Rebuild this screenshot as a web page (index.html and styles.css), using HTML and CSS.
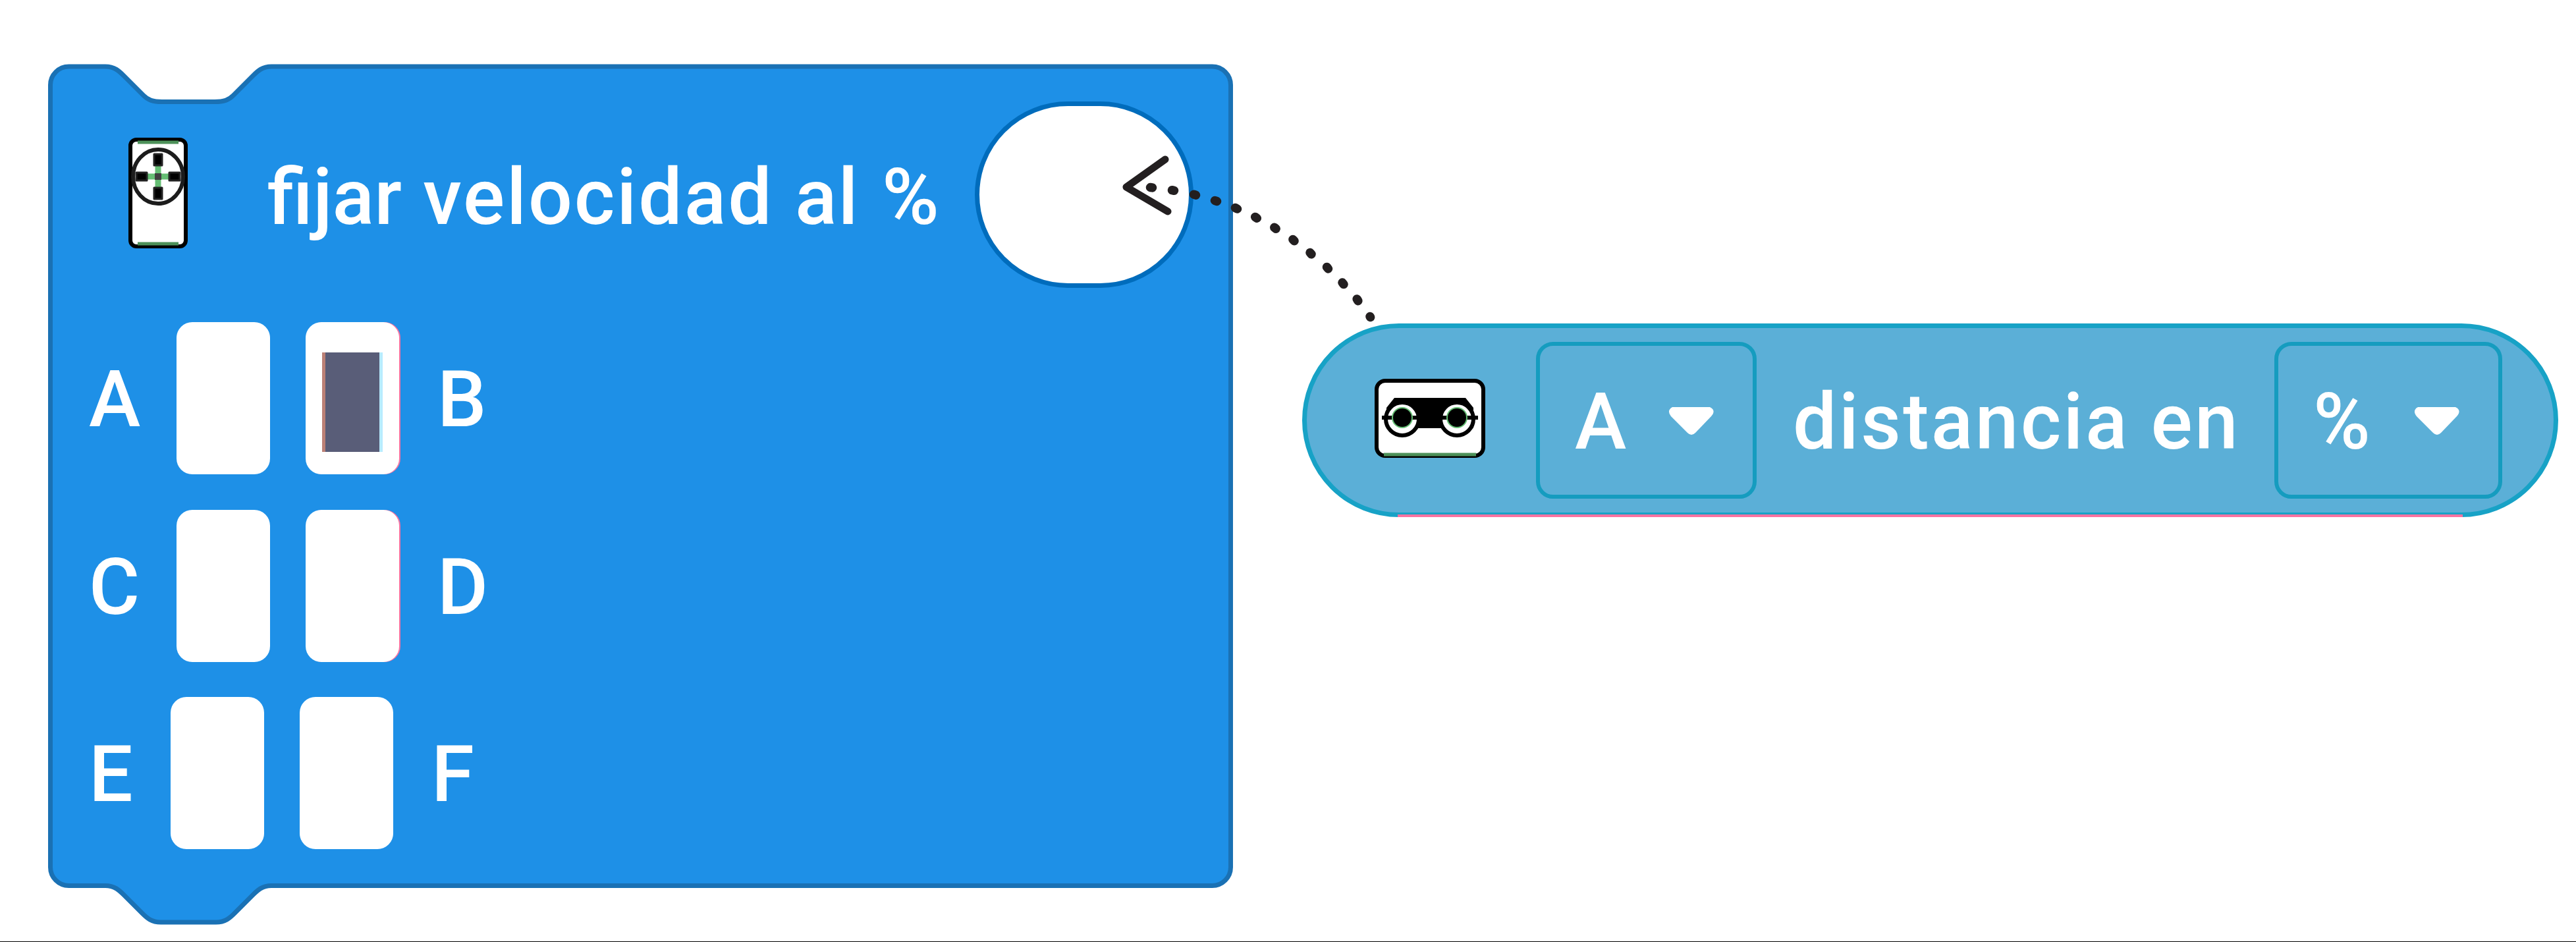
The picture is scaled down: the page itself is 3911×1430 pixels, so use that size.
FILE: index.html
```html
<!DOCTYPE html>
<html lang="es">
<head>
<meta charset="utf-8">
<title>Bloques</title>
<link rel="stylesheet" href="styles.css">
</head>
<body>
<main class="workspace">
  <section class="block">
    <svg class="block-shape" viewBox="0 0 1808 1316" aria-hidden="true">
      <path d="M4.500 33a28 28 0 0 1 28-28H88c14 0 21 7 28 14l30 30c7 7 14 9.500 28 9.500h80c14 0 21-2.500 28-9.500l30-30c7-7 14-14 28-14H1768.500a28 28 0 0 1 28 28V1220.500a28 28 0 0 1-28 28H340c-14 0-21 7-28 14l-28 28c-7 7-14 13.500-28 13.500H172c-14 0-21-6.500-28-13.500l-28-28c-7-7-14-14-28-14H32.500a28 28 0 0 1-28-28Z"/>
    </svg>
    <div class="head">
      <svg class="motor" viewBox="0 0 90 170" aria-hidden="true">
        <rect x="3" y="4" width="84" height="162" rx="9" fill="#fff" stroke="#000" stroke-width="6"/>
        <path d="M14 8H76M14 162H76" stroke="#4d9159" stroke-width="5"/>
        <ellipse cx="45" cy="60" rx="38" ry="41" fill="#fff" stroke="#1c1c1c" stroke-width="6"/>
        <path d="M45 36V84M20 60H70" stroke="#65be74" stroke-width="9"/>
        <path d="M40 60H50" stroke="#404040" stroke-width="10"/>
        <path d="M39 26h12v17H39zM39 77h12v17H39zM12 54h16v12H12zM62 54h16v12H62z" stroke="#222" stroke-width="3" stroke-linejoin="round"/>
      </svg>
      <span class="text title">fijar <span class="wide">velocidad</span> <span class="spaced">al %</span></span>
      <span class="socket"></span>
    </div>
    <div class="ports">
      <div class="row"><span class="text left">A</span><span class="slot"></span><span class="slot edge"><i class="mark"></i></span><span class="text right">B</span></div>
      <div class="row"><span class="text left">C</span><span class="slot"></span><span class="slot edge"></span><span class="text right">D</span></div>
      <div class="row last"><span class="text left">E</span><span class="slot"></span><span class="slot"></span><span class="text right">F</span></div>
    </div>
  </section>

  <section class="reporter">
    <svg class="sensor" viewBox="0 0 168 120" aria-hidden="true">
      <rect x="3" y="3" width="162" height="114" rx="13" fill="#fff" stroke="#000" stroke-width="6"/>
      <path d="M14 115H154" stroke="#4d9159" stroke-width="5"/>
      <path d="M30 29H138L150 44V75H18V44Z"/>
      <circle cx="42" cy="61" r="25" fill="#fff" stroke="#000" stroke-width="6"/>
      <circle cx="125" cy="61" r="25" fill="#fff" stroke="#000" stroke-width="6"/>
      <path d="M11 59H157" stroke="#000" stroke-width="6"/>
      <circle cx="42" cy="59" r="15" stroke="#65be74" stroke-width="2"/>
      <circle cx="125" cy="59" r="15" stroke="#65be74" stroke-width="2"/>
    </svg>
    <div class="menu port"><span class="text">A</span>
      <svg class="caret" viewBox="0 0 76 50" aria-hidden="true"><path d="M9 5H66Q76 10 68 19L44 44Q38 50 32 44L7 19Q0 10 9 5Z"/></svg>
    </div>
    <span class="text label">distancia en</span>
    <div class="menu unit"><span class="text">%</span>
      <svg class="caret" viewBox="0 0 76 50" aria-hidden="true"><path d="M9 5H66Q76 10 68 19L44 44Q38 50 32 44L7 19Q0 10 9 5Z"/></svg>
    </div>
  </section>

  <svg class="arrow" viewBox="1690 220 410 280" aria-hidden="true">
    <path stroke-width="11" d="M1769 242L1710 284L1773 321"/>
    <path stroke-width="13.500" d="M1746.500 284.500l3 .4M1779.500 288.700l3 .6M1812.500 295.200l3 1M1844.500 304.400l3 1.200M1875.500 315.500l3 1.600M1905.700 329.400l2.600 1.800M1934.800 345.300l2.400 2M1962.900 363.600l2.200 2.200M1989 383.500l2 2.400M2014.500 405.400l2 2.600M2038 429l2 2.600M2060.200 453.900l1.600 2.800M2080 480.500l.6 1"/>
  </svg>
</main>
</body>
</html>
```

FILE: styles.css
```css
* { box-sizing: border-box; }

body { margin: 0; background: #fff; }

.workspace {
  position: relative;
  width: 3911px;
  height: 1430px;
  overflow: hidden;
  border-bottom: 1px solid #000;
}

.text {
  font: 500 118px/140px Roboto, sans-serif;
  color: #fff;
  white-space: nowrap;
}

.block {
  position: absolute;
  left: 72px;
  top: 96px;
  width: 1808px;
  height: 1316px;
}

.block-shape {
  position: absolute;
  inset: 0;
  width: 1808px;
  height: 1316px;
  fill: #1e90e7;
  stroke: #1a71b4;
  stroke-width: 7px;
}

.head {
  position: relative;
  display: flex;
  align-items: center;
  height: 283px;
  margin-top: 58px;
  padding-left: 123px;
}

.motor { width: 90px; height: 170px; margin-right: 121px; margin-bottom: 5px; }

.title { width: 1074px; padding-top: 8px; word-spacing: 3px; }

.wide { letter-spacing: 2.9px; }

.spaced { letter-spacing: 2px; }

.socket {
  width: 332px;
  height: 283px;
  border: 7px solid #006cbc;
  border-radius: 142px;
  background: #fff;
}

.ports {
  position: relative;
  display: flex;
  flex-direction: column;
  gap: 53px;
  margin-top: 52px;
  padding-left: 63px;
}

.row { display: flex; align-items: center; height: 231.500px; }

.left { width: 133px; padding-top: 5px; }

.slot {
  display: flex;
  align-items: center;
  justify-content: center;
  width: 142px;
  height: 231px;
  margin-right: 54px;
  border-radius: 24px;
  background: #fff;
}

.right { padding-top: 5px; padding-left: 4px; }

.edge { box-shadow: 2px 0 0 #fb73a1; }

.last .left { width: 124px; }

.mark {
  width: 92px;
  height: 151px;
  margin-top: 11px;
  border-left: 5px solid #bb8076;
  border-right: 5px solid #b8ecff;
  background: #595d78;
}

.reporter {
  position: absolute;
  left: 1977px;
  top: 491px;
  display: flex;
  align-items: center;
  width: 1907px;
  height: 294px;
  padding-left: 103px;
  border: 7px solid #17a2c6;
  border-radius: 147px;
  background: #5bafd7;
}

.reporter::after {
  content: "";
  position: absolute;
  left: 138px;
  right: 138px;
  bottom: -7px;
  height: 4px;
  background: #fb73a1;
}

.sensor { width: 168px; height: 120px; margin-right: 77px; margin-bottom: 7px; }

.menu {
  display: flex;
  align-items: center;
  height: 238px;
  border: 6px solid #159cbf;
  border-radius: 26px;
}

.menu .text { padding-top: 5px; }

.port { width: 335px; padding-left: 53px; }
.port .text { width: 139px; }
.unit { width: 346px; padding-left: 53px; }
.unit .text { width: 150px; }

.caret { width: 76px; height: 50px; fill: #fff; }

.label { width: 786px; padding-left: 55px; padding-top: 5px; letter-spacing: 3.3px; }

.arrow {
  position: absolute;
  left: 1690px;
  top: 220px;
  width: 410px;
  height: 280px;
  fill: none;
  stroke: #231f20;
  stroke-linecap: round;
  stroke-linejoin: round;
}
```
